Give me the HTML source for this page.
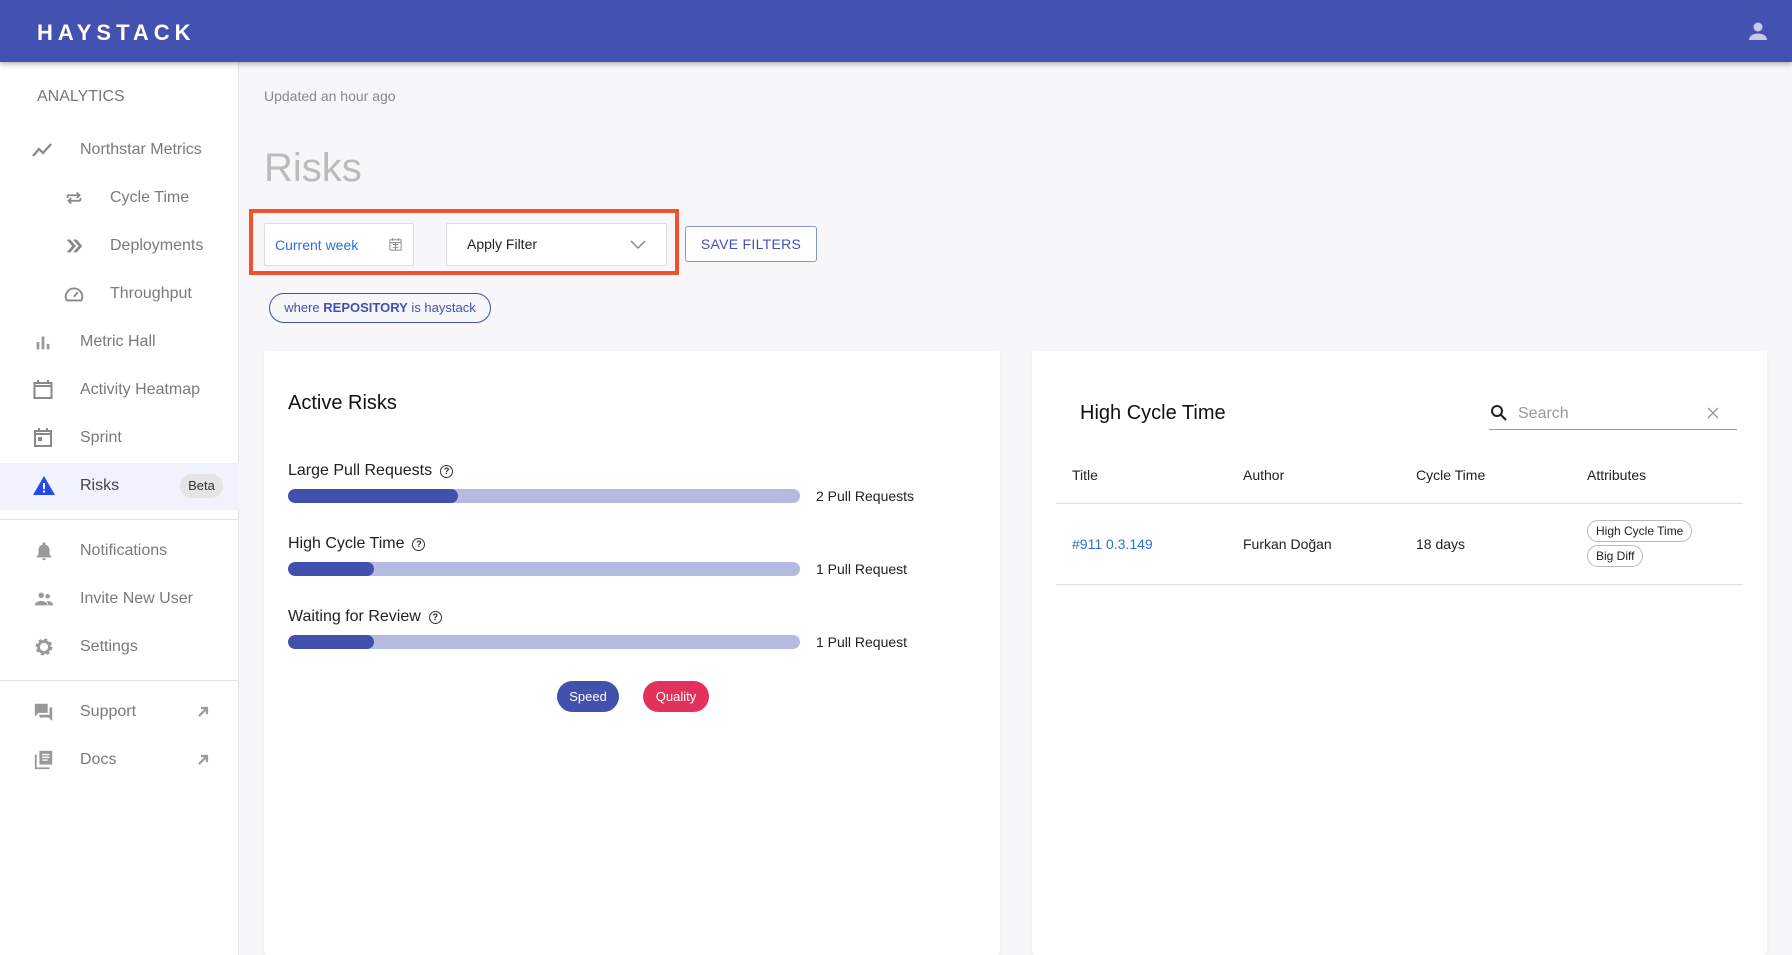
<!DOCTYPE html>
<html style="overflow:hidden;width:1792px;height:955px"><head><meta charset="utf-8">
<style>
*{box-sizing:border-box;margin:0;padding:0}
body{width:1792px;height:955px;overflow:hidden;background:#f7f7f9;font-family:"Liberation Sans",sans-serif;position:relative}
.a{position:absolute}
.hdr{left:0;top:0;width:1792px;height:62px;background:#4352b1;box-shadow:0 2px 5px rgba(0,0,0,.3);z-index:5}
.logo{left:37px;top:20px;color:#fff;font-weight:bold;font-size:22px;letter-spacing:5px}
.side{left:0;top:62px;width:239px;height:893px;background:#fff;border-right:1px solid #e4e4e8}
.nav{left:80px;font-size:16px;color:#7a7a7a;transform:translateY(-50%)}
.sub{left:110px}
.ic{transform:translate(-50%,-50%)}
.div{left:0;width:239px;height:1px;background:#e4e4e8}
.card{background:#fff;border-radius:4px;box-shadow:0 1px 3px rgba(0,0,0,.06)}
.lbl{left:288px;font-size:16px;color:#222;transform:translateY(-50%)}
.bar{left:288px;width:512px;height:14px;border-radius:7px;background:#b5bbe0;overflow:hidden}
.bar i{display:block;height:100%;background:#4251ae;border-radius:7px}
.cnt{left:816px;font-size:14px;color:#222;transform:translateY(-50%)}
.th{font-size:14px;color:#222;transform:translateY(-50%)}
.q{display:inline-block;width:13px;height:13px;border:1.3px solid #333;border-radius:50%;font-size:9px;text-align:center;line-height:11px;margin-left:8px;vertical-align:1px;font-weight:bold}
.chip{border:1px solid #bbb;border-radius:11px;font-size:12px;color:#222;padding:0 8px;height:22px;line-height:20px}
</style></head><body>
<div class="a hdr">
 <div class="a logo">HAYSTACK</div>
 <svg class="a" style="left:1746px;top:19px" width="24" height="24" viewBox="0 0 24 24"><circle cx="12" cy="8" r="4.5" fill="#c5cae9"/><path d="M3 21c0-4 4-6.5 9-6.5s9 2.5 9 6.5z" fill="#c5cae9"/></svg>
</div>
<div class="a side"></div>
<div class="a" style="left:37px;top:88px;font-size:16px;color:#777">ANALYTICS</div>

<svg class="a ic" style="left:43px;top:150px" width="24" height="24" viewBox="0 0 24 24"><path d="M2 18l6-7 4 4 8-9" stroke="#888" stroke-width="2.2" fill="none"/></svg>
<div class="a nav" style="top:150px">Northstar Metrics</div>
<svg class="a ic" style="left:74px;top:198px" width="22" height="22" viewBox="0 0 24 24"><path d="M5 9h13M15 6l3 3-3 3M19 15H6M9 12l-3 3 3 3M5 9v3M19 12v3" stroke="#888" stroke-width="2" fill="none"/></svg>
<div class="a nav sub" style="top:198px">Cycle Time</div>
<svg class="a ic" style="left:74px;top:246px" width="22" height="22" viewBox="0 0 24 24"><path d="M4 5l6 7-6 7h4l6-7-6-7zM11 5l6 7-6 7h4l6-7-6-7z" fill="#888"/></svg>
<div class="a nav sub" style="top:246px">Deployments</div>
<svg class="a ic" style="left:74px;top:294px" width="22" height="22" viewBox="0 0 24 24"><path d="M4 19a9 9 0 1 1 16 0z" stroke="#888" stroke-width="2" fill="none"/><path d="M12 15l4-5" stroke="#888" stroke-width="2"/></svg>
<div class="a nav sub" style="top:294px">Throughput</div>
<svg class="a ic" style="left:43px;top:342px" width="22" height="22" viewBox="0 0 24 24"><path d="M5 12h3v8H5zM10.5 6h3v14h-3zM16 14h3v6h-3z" fill="#999"/></svg>
<div class="a nav" style="top:342px">Metric Hall</div>
<svg class="a ic" style="left:43px;top:390px" width="24" height="24" viewBox="0 0 24 24"><rect x="3.5" y="5" width="17" height="15" stroke="#888" stroke-width="2" fill="none"/><path d="M3.5 8h17M7 2v4M17 2v4" stroke="#888" stroke-width="2"/></svg>
<div class="a nav" style="top:390px">Activity Heatmap</div>
<svg class="a ic" style="left:43px;top:438px" width="24" height="24" viewBox="0 0 24 24"><rect x="4" y="5" width="16" height="15" stroke="#888" stroke-width="2" fill="none"/><path d="M4 8h16M8 2v4M16 2v4" stroke="#888" stroke-width="2"/><rect x="7" y="11" width="4" height="4" fill="#888"/></svg>
<div class="a nav" style="top:438px">Sprint</div>
<div class="a" style="left:0;top:463px;width:239px;height:47px;background:#f0f3fe"></div>
<svg class="a ic" style="left:44px;top:486px" width="24" height="24" viewBox="0 0 24 24"><path d="M12 2L1 21h22z" fill="#2449f0"/><path d="M11 9h2v6h-2zM11 16.5h2v2h-2z" fill="#fff"/></svg>
<div class="a nav" style="top:486px;color:#444">Risks</div>
<div class="a" style="left:180px;top:474px;width:43px;height:24px;border-radius:12px;background:#e4e4e4;font-size:13px;color:#333;text-align:center;line-height:24px">Beta</div>
<div class="a div" style="top:519px"></div>
<svg class="a ic" style="left:44px;top:551px" width="22" height="22" viewBox="0 0 24 24"><path d="M12 22a2 2 0 0 0 2-2h-4a2 2 0 0 0 2 2zM18 16v-5c0-3-2-5.5-4.5-6V4a1.5 1.5 0 0 0-3 0v1C8 5.5 6 8 6 11v5l-2 2v1h16v-1z" fill="#999"/></svg>
<div class="a nav" style="top:551px">Notifications</div>
<svg class="a ic" style="left:44px;top:599px" width="22" height="22" viewBox="0 0 24 24"><circle cx="9" cy="8" r="3" fill="#999"/><circle cx="16" cy="9" r="2.5" fill="#999"/><path d="M2 19c0-3 3.5-5 7-5s7 2 7 5zM15 14c3 0 7 1.5 7 5h-5z" fill="#999"/></svg>
<div class="a nav" style="top:599px">Invite New User</div>
<svg class="a ic" style="left:44px;top:647px" width="22" height="22" viewBox="0 0 24 24"><circle cx="12" cy="12" r="7" fill="none" stroke="#999" stroke-width="4.5" stroke-dasharray="3 2.5"/><circle cx="12" cy="12" r="6" fill="none" stroke="#999" stroke-width="3"/></svg>
<div class="a nav" style="top:647px">Settings</div>
<div class="a div" style="top:680px"></div>
<svg class="a ic" style="left:44px;top:712px" width="22" height="22" viewBox="0 0 24 24"><path d="M2 3h14v10H6l-4 4zM18 7h3v15l-4-4H7v-3h11z" fill="#999"/></svg>
<div class="a nav" style="top:712px">Support</div>
<svg class="a ic" style="left:203px;top:712px" width="16" height="16" viewBox="0 0 16 16"><path d="M4 12L12 4M6 4h6v6" stroke="#999" stroke-width="2.2" fill="none"/></svg>
<svg class="a ic" style="left:44px;top:760px" width="22" height="22" viewBox="0 0 24 24"><path d="M3 6v15h15" stroke="#999" stroke-width="2" fill="none"/><rect x="7" y="2" width="14" height="15" fill="#999"/><path d="M10 6h8M10 9h8M10 12h6" stroke="#fff" stroke-width="1.5"/></svg>
<div class="a nav" style="top:760px">Docs</div>
<svg class="a ic" style="left:203px;top:760px" width="16" height="16" viewBox="0 0 16 16"><path d="M4 12L12 4M6 4h6v6" stroke="#999" stroke-width="2.2" fill="none"/></svg>

<div class="a" style="left:264px;top:88px;font-size:14px;color:#888">Updated an hour ago</div>
<div class="a" style="left:264px;top:146px;font-size:40px;color:#bbb">Risks</div>
<div class="a" style="left:249px;top:209px;width:430px;height:66px;border:4px solid #f0532a"></div>
<div class="a" style="left:264px;top:223px;width:150px;height:43px;background:#fff;border:1px solid #ddd;border-radius:2px"></div>
<div class="a" style="left:275px;top:237px;font-size:14px;color:#2f6fd8">Current week</div>
<svg class="a" style="left:388px;top:237px" width="15" height="15" viewBox="0 0 16 16"><rect x="2" y="3" width="12" height="11" stroke="#888" fill="none"/><path d="M2 6h12M5 1v3M11 1v3M5 8h6M5 11h6M8 6v8" stroke="#888" stroke-width="1"/></svg>
<div class="a" style="left:446px;top:223px;width:221px;height:43px;background:#fff;border:1px solid #ddd;border-radius:2px"></div>
<div class="a" style="left:467px;top:236px;font-size:14px;color:#222">Apply Filter</div>
<svg class="a" style="left:629px;top:237px" width="18" height="14" viewBox="0 0 18 14"><path d="M2 4l7 7 7-7" stroke="#888" stroke-width="1.5" fill="none"/></svg>
<div class="a" style="left:685px;top:226px;width:132px;height:36px;border:1px solid #8a93cf;border-radius:3px;background:#fff;color:#3f51b5;font-size:14px;text-align:center;line-height:34px;letter-spacing:.3px">SAVE FILTERS</div>
<div class="a" style="left:269px;top:293px;width:222px;height:30px;border:1.5px solid #3f51b5;border-radius:15px;font-size:13px;color:#3f51b5;text-align:center;line-height:27px">where <b>REPOSITORY</b> is haystack</div>

<div class="a card" style="left:264px;top:351px;width:736px;height:604px"></div>
<div class="a" style="left:288px;top:392px;font-size:20px;color:#111">Active Risks</div>
<div class="a lbl" style="top:471px">Large Pull Requests<span class="q">?</span></div>
<div class="a bar" style="top:489px"><i style="width:170px"></i></div>
<div class="a cnt" style="top:496px">2 Pull Requests</div>
<div class="a lbl" style="top:544px">High Cycle Time<span class="q">?</span></div>
<div class="a bar" style="top:562px"><i style="width:86px"></i></div>
<div class="a cnt" style="top:569px">1 Pull Request</div>
<div class="a lbl" style="top:617px">Waiting for Review<span class="q">?</span></div>
<div class="a bar" style="top:635px"><i style="width:86px"></i></div>
<div class="a cnt" style="top:642px">1 Pull Request</div>
<div class="a" style="left:557px;top:681px;width:62px;height:31px;border-radius:16px;background:#4251ae;color:#fff;font-size:13px;text-align:center;line-height:31px">Speed</div>
<div class="a" style="left:643px;top:681px;width:66px;height:31px;border-radius:16px;background:#e2315b;color:#fff;font-size:13px;text-align:center;line-height:31px">Quality</div>

<div class="a card" style="left:1032px;top:351px;width:735px;height:604px"></div>
<div class="a" style="left:1080px;top:402px;font-size:20px;color:#111">High Cycle Time</div>
<svg class="a" style="left:1490px;top:404px" width="18" height="18" viewBox="0 0 18 18"><circle cx="7" cy="7" r="5" stroke="#222" stroke-width="2" fill="none"/><path d="M11 11l5 5" stroke="#222" stroke-width="2.2"/></svg>
<div class="a" style="left:1518px;top:405px;font-size:16px;color:#999">Search</div>
<svg class="a" style="left:1706px;top:406px" width="14" height="14" viewBox="0 0 14 14"><path d="M2 2l10 10M12 2L2 12" stroke="#999" stroke-width="1.4"/></svg>
<div class="a" style="left:1489px;top:429px;width:248px;height:1px;background:#999"></div>
<div class="a th" style="left:1072px;top:475px">Title</div>
<div class="a th" style="left:1243px;top:475px">Author</div>
<div class="a th" style="left:1416px;top:475px">Cycle Time</div>
<div class="a th" style="left:1587px;top:475px">Attributes</div>
<div class="a" style="left:1056px;top:503px;width:687px;height:1px;background:#e0e0e0"></div>
<div class="a th" style="left:1072px;top:544px;color:#2f6fd8">#911 0.3.149</div>
<div class="a th" style="left:1243px;top:544px">Furkan Doğan</div>
<div class="a th" style="left:1416px;top:544px">18 days</div>
<div class="a chip" style="left:1587px;top:520px">High Cycle Time</div>
<div class="a chip" style="left:1587px;top:545px">Big Diff</div>
<div class="a" style="left:1056px;top:584px;width:687px;height:1px;background:#e0e0e0"></div>
</body></html>
